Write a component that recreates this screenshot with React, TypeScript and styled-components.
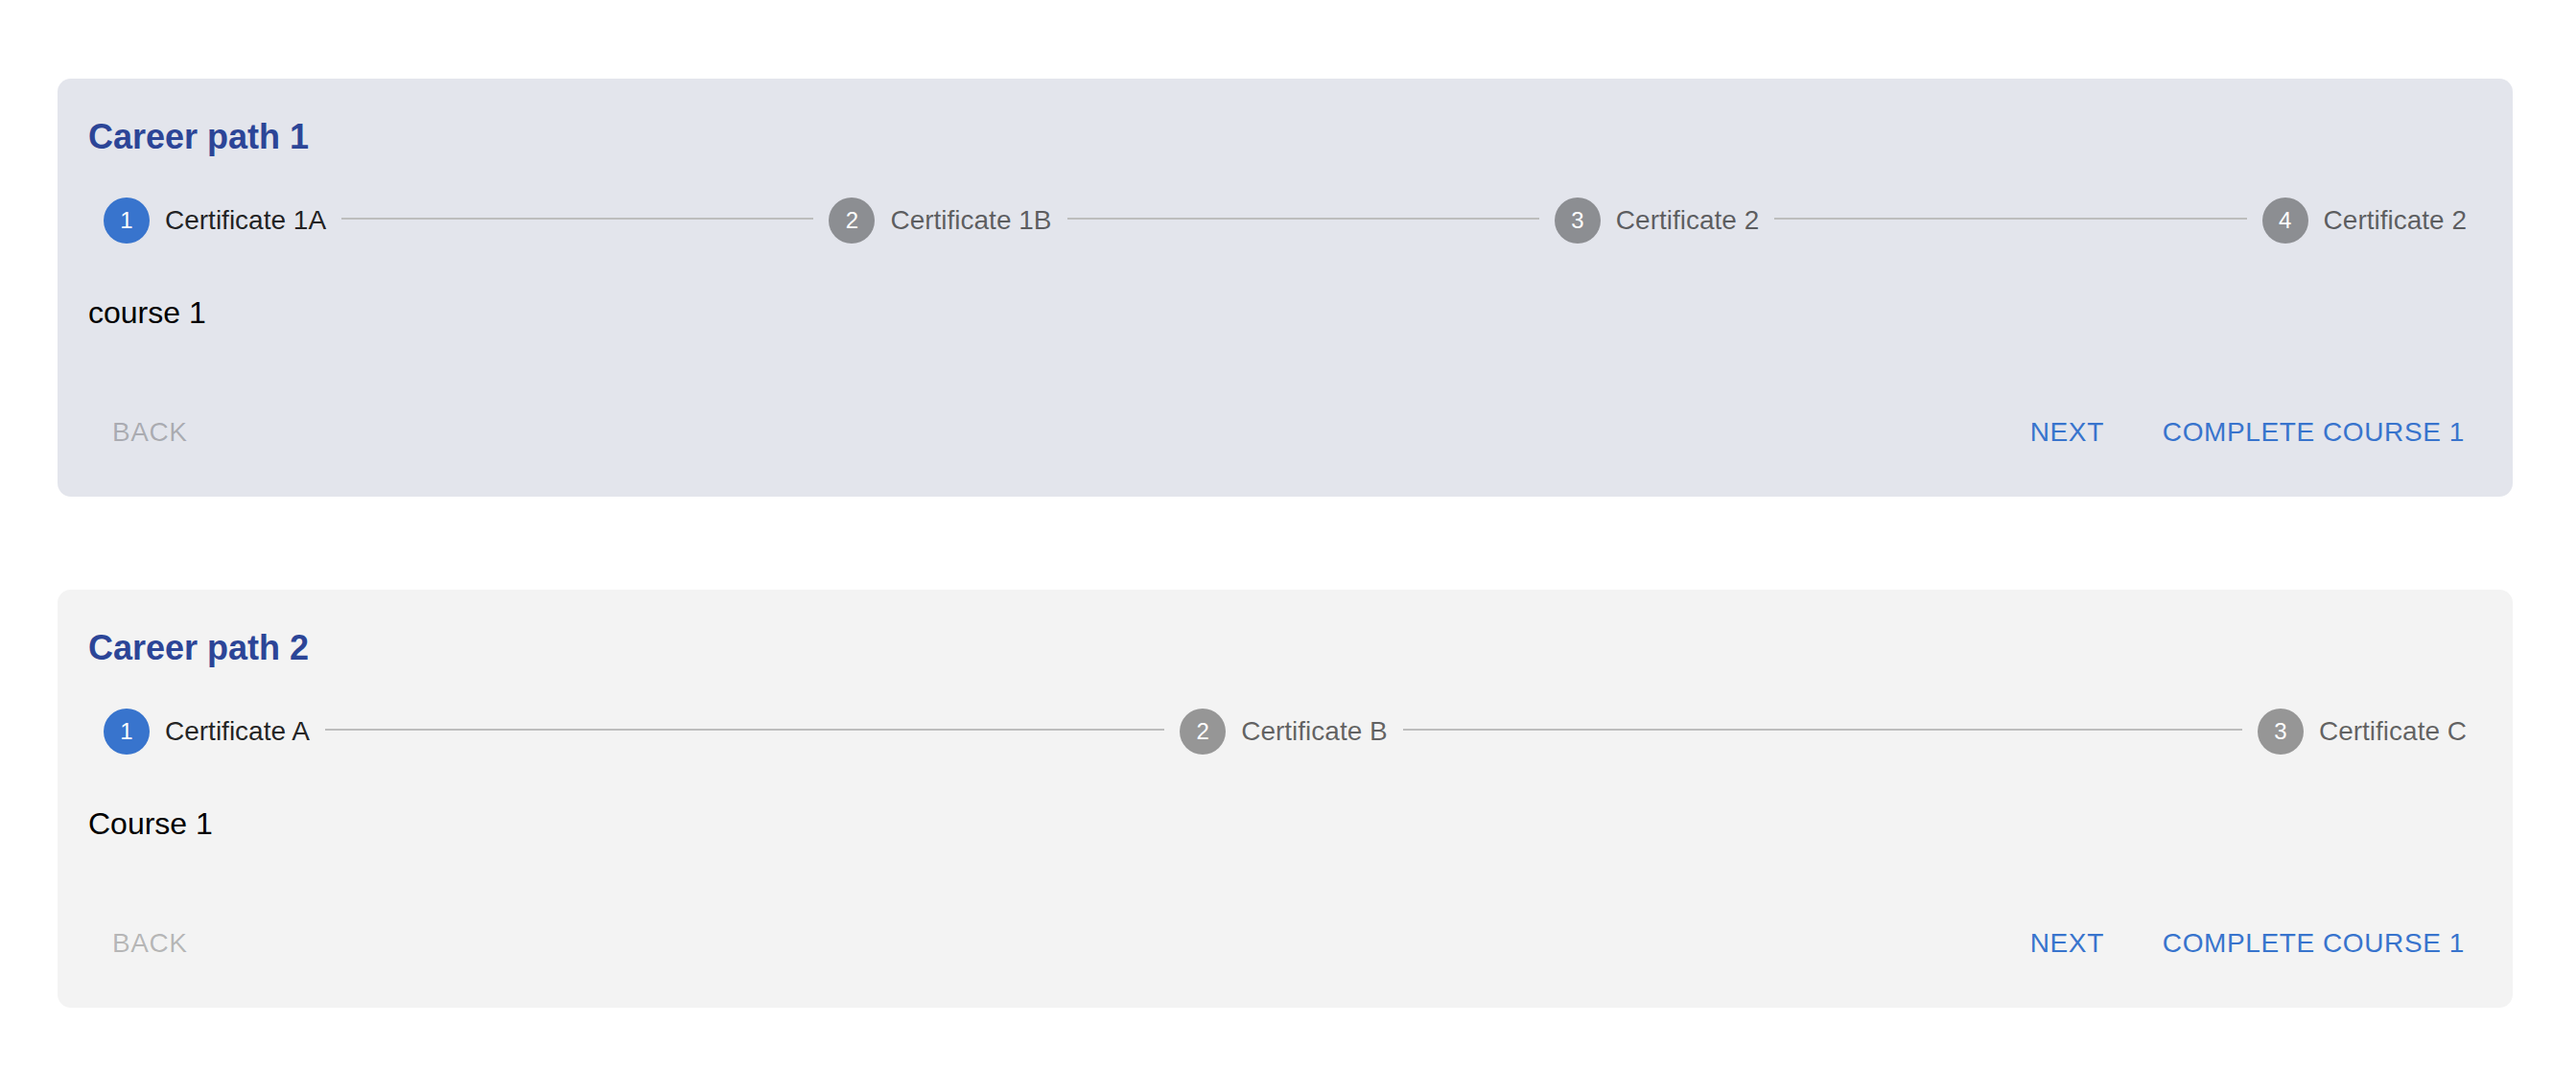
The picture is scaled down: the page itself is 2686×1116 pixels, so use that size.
import React from "react";
import styled, { createGlobalStyle } from "styled-components";

const GlobalStyle = createGlobalStyle`
  html, body {
    margin: 0;
    padding: 0;
    background: #ffffff;
  }
  body {
    font-family: "Liberation Sans", Arial, Helvetica, sans-serif;
  }
  * { box-sizing: border-box; }
`;

const Page = styled.main`
  display: flex;
  flex-direction: column;
  gap: 97px;
  padding: 82px 66px 40px 60px;
`;

const Card = styled.section<{ $bg: string }>`
  background: ${(p) => p.$bg};
  border-radius: 14px;
  padding: 32px 32px 31px;
`;

const Title = styled.h2`
  margin: 7px 0 0;
  font-family: "Liberation Sans", Arial, sans-serif;
  font-weight: 700;
  font-size: 36px;
  line-height: 44px;
  color: #2c4597;
`;

const Stepper = styled.div`
  display: flex;
  align-items: center;
  margin-top: 41px;
`;

const Step = styled.div`
  display: flex;
  align-items: center;
  gap: 16px;
  padding: 0 16px;
  flex: none;
`;

const StepIcon = styled.span<{ $active: boolean }>`
  width: 48px;
  height: 48px;
  border-radius: 50%;
  flex: none;
  display: flex;
  align-items: center;
  justify-content: center;
  background: ${(p) => (p.$active ? "#3874cd" : "rgba(0, 0, 0, 0.38)")};
  color: #ffffff;
  font-size: 24px;
  line-height: 1;
`;

const StepLabel = styled.span<{ $active: boolean }>`
  font-size: 28px;
  line-height: 40px;
  white-space: nowrap;
  color: ${(p) => (p.$active ? "rgba(0, 0, 0, 0.87)" : "rgba(0, 0, 0, 0.6)")};
`;

const Connector = styled.span`
  flex: 1 1 auto;
  height: 0;
  border-top: 2px solid #bdbdbd;
  margin-bottom: 4px;
`;

const CourseText = styled.p`
  margin: 48px 0 0;
  font-size: 32px;
  line-height: 48px;
  color: #000000;
`;

const Footer = styled.div`
  display: flex;
  align-items: center;
  margin-top: 64px;
`;

const RightGroup = styled.div`
  display: flex;
  align-items: center;
  gap: 29px;
  margin-left: auto;
  margin-right: 2px;
`;

const TextButton = styled.button<{ $disabled?: boolean }>`
  background: none;
  border: 0;
  padding: 12px 16px;
  margin: 0;
  font-family: "Liberation Sans", Arial, sans-serif;
  font-weight: 400;
  font-size: 28px;
  line-height: 49px;
  letter-spacing: 0.6px;
  text-transform: uppercase;
  cursor: ${(p) => (p.$disabled ? "default" : "pointer")};
  color: ${(p) => (p.$disabled ? "rgba(0, 0, 0, 0.26)" : "#3874cd")};
`;

const BackButton = styled(TextButton)`
  margin-left: 9px;
`;

type PathData = {
  title: string;
  bg: string;
  steps: string[];
  course: string;
};

const paths: PathData[] = [
  {
    title: "Career path 1",
    bg: "#e3e5ec",
    steps: ["Certificate 1A", "Certificate 1B", "Certificate 2", "Certificate 2"],
    course: "course 1",
  },
  {
    title: "Career path 2",
    bg: "#f3f3f3",
    steps: ["Certificate A", "Certificate B", "Certificate C"],
    course: "Course 1",
  },
];

function CareerCard({ data }: { data: PathData }) {
  const active = 0;
  return (
    <Card $bg={data.bg}>
      <Title>{data.title}</Title>
      <Stepper>
        {data.steps.map((label, i) => (
          <React.Fragment key={i}>
            {i > 0 && <Connector />}
            <Step>
              <StepIcon $active={i === active}>{i + 1}</StepIcon>
              <StepLabel $active={i === active}>{label}</StepLabel>
            </Step>
          </React.Fragment>
        ))}
      </Stepper>
      <CourseText>{data.course}</CourseText>
      <Footer>
        <BackButton $disabled>Back</BackButton>
        <RightGroup>
          <TextButton>Next</TextButton>
          <TextButton>Complete course 1</TextButton>
        </RightGroup>
      </Footer>
    </Card>
  );
}

export default function App() {
  return (
    <>
      <GlobalStyle />
      <Page>
        {paths.map((p) => (
          <CareerCard key={p.title} data={p} />
        ))}
      </Page>
    </>
  );
}
